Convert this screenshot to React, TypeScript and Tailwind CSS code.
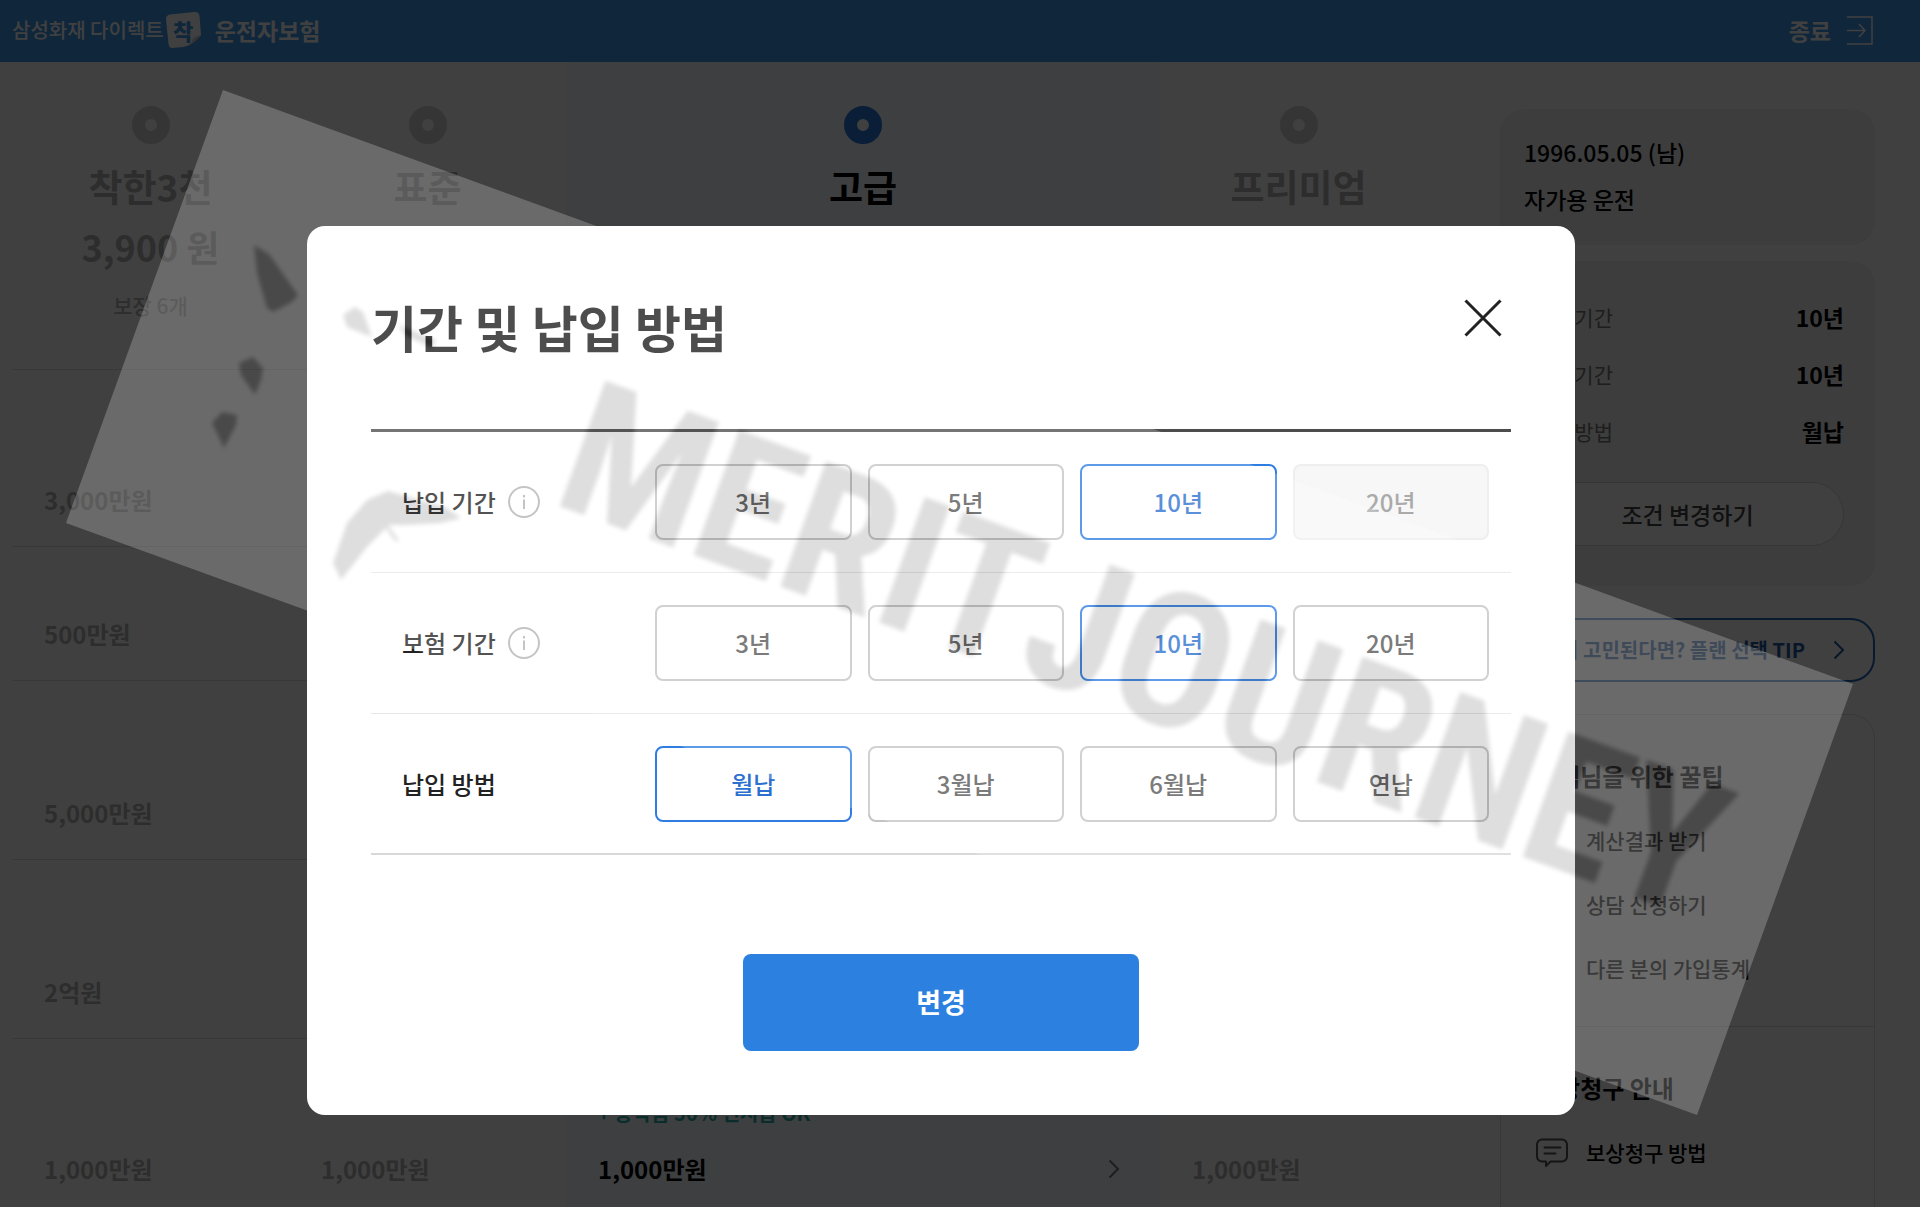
import { ReactNode } from "react";

function Ring({ active = false }: { active?: boolean }) {
  return (
    <span
      className={
        "block size-[38px] rounded-full border-[13px] bg-white " +
        (active ? "border-[#2878e0]" : "border-[#d4d4d4]")
      }
    />
  );
}

function Chevron({ className }: { className: string }) {
  return (
    <svg viewBox="0 0 12 20" className={className} fill="none" stroke="currentColor" strokeWidth="2">
      <path d="M1.5 1.5 10 10l-8.5 8.5" />
    </svg>
  );
}

type Plan = {
  name: string;
  price?: string;
  count?: string;
  active?: boolean;
  values: string[];
};

const plans: Plan[] = [
  {
    name: "착한3천",
    price: "3,900 원",
    count: "보장 6개",
    values: ["3,000만원", "500만원", "5,000만원", "2억원", "1,000만원"],
  },
  { name: "표준", values: ["", "", "", "", "1,000만원"] },
  { name: "고급", active: true, values: ["", "", "", "", "1,000만원"] },
  { name: "프리미엄", values: ["", "", "", "", "1,000만원"] },
];

const rowHeights = ["h-[177px]", "h-[134px]", "h-[179px]", "h-[179px]", "h-[177px]"];

function PlanColumn({ plan }: { plan: Plan }) {
  return (
    <section className={plan.active ? "bg-[#f6f9ff]" : ""}>
      <button
        type="button"
        className={
          "flex h-[308px] w-full flex-col items-center border-b border-[#e0e0e0] pt-11 font-bold " +
          (plan.active ? "text-black" : "text-[#b4b4b4]")
        }
      >
        <Ring active={plan.active} />
        <span className="mt-4 text-[37px] leading-[52px]">{plan.name}</span>
        {plan.price && <span className="mt-2 text-4xl leading-[52px]">{plan.price}</span>}
        {plan.count && (
          <span className="mt-[18px] text-[21px] leading-[30px] font-medium">{plan.count}</span>
        )}
      </button>
      {plan.values.map((value, i) => (
        <div
          key={i}
          className={
            "flex flex-col justify-end border-b border-[#e0e0e0] px-8 pb-7 text-2xl leading-9 font-bold " +
            rowHeights[i] +
            (plan.active ? " text-black" : " text-[#b4b4b4]")
          }
        >
          {plan.active && i === 4 && (
            <span className="mb-6 text-xl leading-7 text-[#2bb0a8]">+ 공탁금 50% 선지급 OK</span>
          )}
          <div className="flex items-center justify-between">
            <span>{value}</span>
            {plan.active && i === 4 && <Chevron className="mr-2 h-5 w-3 text-[#777777]" />}
          </div>
        </div>
      ))}
    </section>
  );
}

function HeaderBar() {
  return (
    <header className="flex h-[62px] items-center justify-between bg-[#3d98ec] pr-[47px] pb-0.5 pl-3 text-white">
      <div className="flex items-center">
        <span className="text-xl font-medium">삼성화재 다이렉트</span>
        <span className="relative ml-0.5 flex h-9 w-[35px] items-center justify-center">
          <svg viewBox="0 0 35 36" className="absolute inset-0 size-full">
            <path d="M4 2.500 28 0q5-.5 5.500 4L35 23q-8 10-18 12L6 36q-3 0-3.500-4L0 7q0-4 4-4.500Z" fill="#fff" />
            <path d="M35 23q-9 2-9 7-3 4-9 5 11-2 18-12Z" fill="#c4ccd4" />
          </svg>
          <span className="relative text-[22px] leading-8 font-black text-[#3d98ec]">착</span>
        </span>
        <span className="ml-3.5 text-[23px] font-bold">운전자보험</span>
      </div>
      <button type="button" className="flex items-center gap-4 text-[23px] font-bold">
        종료
        <svg viewBox="0 0 26 29" className="h-[29px] w-[26px]" fill="none" stroke="currentColor" strokeWidth="1.500">
          <path d="M0 1h25v27H0M0 14.500h18M12 8l6 6.500-6 6.500" />
        </svg>
      </button>
    </header>
  );
}

function SummaryRow({ label, value }: { label: string; value: string }) {
  return (
    <div className="flex h-[57px] items-center justify-between">
      <dt className="text-[21px] text-[#777777]">{label}</dt>
      <dd className="text-[23px] font-bold text-black">{value}</dd>
    </div>
  );
}

function SideLink({ children, icon }: { children: string; icon: ReactNode }) {
  return (
    <a href="#" className="flex h-16 items-center gap-[18px] text-[21px] font-medium">
      {icon}
      {children}
    </a>
  );
}

function BubbleIcon() {
  return (
    <svg viewBox="0 0 32 30" className="h-[30px] w-8" fill="none" stroke="#555555" strokeWidth="2">
      <path d="M6 1.500h20a5 5 0 0 1 5 5v12a5 5 0 0 1-5 5H14.500L10 28v-4.500H6a5 5 0 0 1-5-5v-12a5 5 0 0 1 5-5Z" strokeLinejoin="round" />
      <path d="M8.500 9.500h16M8.500 15.500h11" strokeLinecap="round" />
    </svg>
  );
}

function Sidebar() {
  return (
    <aside className="flex w-[375px] shrink-0 flex-col pt-[47px]">
      <div className="h-[136px] rounded-3xl bg-[#f3f3f3] px-6 pt-5 text-[23px] leading-[47px] font-medium text-black">
        <p>1996.05.05 (남)</p>
        <p>자가용 운전</p>
      </div>
      <div className="mt-4 h-[325px] rounded-3xl bg-[#f3f3f3] px-[31px] pt-7">
        <dl>
          <SummaryRow label="납입 기간" value="10년" />
          <SummaryRow label="보험 기간" value="10년" />
          <SummaryRow label="납입 방법" value="월납" />
        </dl>
        <button
          type="button"
          className="mt-[22px] h-16 w-full rounded-full border border-[#d4d4d4] bg-white text-[23px] font-medium text-[#444444]"
        >
          조건 변경하기
        </button>
      </div>
      <button
        type="button"
        className="mt-8 flex h-16 items-center justify-end gap-7 rounded-3xl border-2 border-[#2463b8] bg-white pr-7 text-xl font-bold whitespace-nowrap text-[#2358a8]"
      >
        플랜이 고민된다면? 플랜 선택 TIP
        <Chevron className="h-5 w-3" />
      </button>
      <div className="mt-8 rounded-3xl border border-[#e0e0e0] text-black">
        <div className="h-[312px] border-b border-[#e0e0e0] px-[35px] pt-10">
          <h2 className="mb-3 text-2xl leading-[42px] font-bold">고객님을 위한 꿀팁</h2>
          <SideLink icon={<BubbleIcon />}>계산결과 받기</SideLink>
          <SideLink icon={<BubbleIcon />}>상담 신청하기</SideLink>
          <SideLink icon={<BubbleIcon />}>다른 분의 가입통계</SideLink>
        </div>
        <div className="h-[240px] px-[35px] pt-10">
          <h2 className="mb-3 text-2xl leading-[42px] font-bold">보상청구 안내</h2>
          <SideLink icon={<BubbleIcon />}>보상청구 방법</SideLink>
        </div>
      </div>
    </aside>
  );
}

type Option = { label: string; state?: "selected" | "disabled" };

const groups: { title: string; info: boolean; options: Option[] }[] = [
  {
    title: "납입 기간",
    info: true,
    options: [
      { label: "3년" },
      { label: "5년" },
      { label: "10년", state: "selected" },
      { label: "20년", state: "disabled" },
    ],
  },
  {
    title: "보험 기간",
    info: true,
    options: [{ label: "3년" }, { label: "5년" }, { label: "10년", state: "selected" }, { label: "20년" }],
  },
  {
    title: "납입 방법",
    info: false,
    options: [{ label: "월납", state: "selected" }, { label: "3월납" }, { label: "6월납" }, { label: "연납" }],
  },
];

function OptionButton({ option }: { option: Option }) {
  const look =
    option.state === "selected"
      ? "border-2 border-[#2f7de1] text-[#2b6fd0] bg-white"
      : option.state === "disabled"
        ? "border-2 border-[#eeeeee] text-[#aaaaaa] bg-[#f7f7f7]"
        : "border-2 border-[#c4c4c4] text-[#555555] bg-white";
  return (
    <button
      type="button"
      disabled={option.state === "disabled"}
      aria-pressed={option.state === "selected"}
      className={"h-[76px] rounded-lg text-2xl font-medium " + look}
    >
      {option.label}
    </button>
  );
}

function Dialog() {
  return (
    <div
      role="dialog"
      aria-labelledby="dialog-title"
      className="flex w-full max-w-[1268px] flex-col rounded-[18px] bg-white px-16 pb-16"
    >
      <div className="flex h-[203px] items-start justify-between pt-16 pr-2">
        <h1 id="dialog-title" className="text-[50px] leading-[72px] font-bold text-[#1a1a1a]">
          기간 및 납입 방법
        </h1>
        <button type="button" aria-label="닫기" className="mt-2">
          <svg viewBox="0 0 40 40" className="size-10" fill="none" stroke="#222222" strokeWidth="3">
            <path d="M2.500 2.500l35 35M37.500 2.500l-35 35" />
          </svg>
        </button>
      </div>
      <div className="border-t-[3px] border-[#4c4c4c]">
        {groups.map((group, g) => (
          <div
            key={group.title}
            role="group"
            aria-label={group.title}
            className={
              "flex h-[141px] items-center justify-between pr-[22px] pl-[31px] " +
              (g === 2 ? "border-b-2 border-[#d8d8d8]" : "border-b border-[#e4e6e8]")
            }
          >
            <div className="flex items-center gap-3 text-2xl font-medium text-[#222222]">
              {group.title}
              {group.info && (
                <button type="button" aria-label={group.title + " 안내"}>
                  <svg viewBox="0 0 32 32" className="size-8" fill="none" stroke="#b4b4b4" strokeWidth="2">
                    <circle cx="16" cy="16" r="15" />
                    <path d="M16 13.500V23M16 9v2.500" />
                  </svg>
                </button>
              )}
            </div>
            <div className="grid w-[834px] grid-cols-4 gap-4">
              {group.options.map((option) => (
                <OptionButton key={option.label} option={option} />
              ))}
            </div>
          </div>
        ))}
      </div>
      <button
        type="button"
        className="mt-[99px] h-[97px] w-[396px] self-center rounded-lg bg-[#2b80e0] text-[27px] font-bold text-white"
      >
        변경
      </button>
    </div>
  );
}

function Watermark() {
  return (
    <svg
      viewBox="0 0 1920 1207"
      className="pointer-events-none absolute inset-0 size-full opacity-[0.225]"
      preserveAspectRatio="xMidYMin slice"
    >
      <defs>
        <filter id="soft">
          <feGaussianBlur stdDeviation="2" />
        </filter>
      </defs>
      <polygon points="223,90 1853,684 1697,1115 66,523" fill="#ffffff" />
      <g fill="#6c6c6c" filter="url(#soft)">
        <polygon points="254,245 269,254 298,295 292,302 273,312 267,308 257,273" />
        <polygon points="239,363 253,357 263,368 261,380 255,395 241,375" />
        <polygon points="212,423 222,412 237,415 236,425 224,448" />
        <polygon points="343,315 355,307 363,312 372,337 347,327" />
        <polygon points="398,325 436,340 432,348 405,335" />
        <path d="M333 563 347 523 367 500 388 491 402 495 445 507 461 518 441 523 404 525 388 525 400 542 394 540 386 528 367 547 341 580Z" />
        <g
          transform="translate(223 90) rotate(20)"
          className="font-['Liberation_Sans_Narrow','Roboto_Condensed','Liberation_Sans',sans-serif] text-[188px] font-bold"
        >
          <text x="448" y="276">
            MERIT
          </text>
          <text x="1667" y="276" textAnchor="end">
            JOURNEY
          </text>
        </g>
      </g>
    </svg>
  );
}

export default function App() {
  return (
    <div className="relative h-screen overflow-hidden bg-white font-['Noto_Sans_CJK_KR',sans-serif]">
      <HeaderBar />
      <main className="flex items-start justify-between pr-[45px] pl-3">
        <div className="grid w-[1425px] grid-cols-[277px_277px_1fr_277px]">
          {plans.map((plan) => (
            <PlanColumn key={plan.name} plan={plan} />
          ))}
        </div>
        <Sidebar />
      </main>
      <div className="absolute inset-0 flex items-start justify-center bg-black/75 pt-[226px] pr-[38px]">
        <Dialog />
      </div>
      <Watermark />
    </div>
  );
}
